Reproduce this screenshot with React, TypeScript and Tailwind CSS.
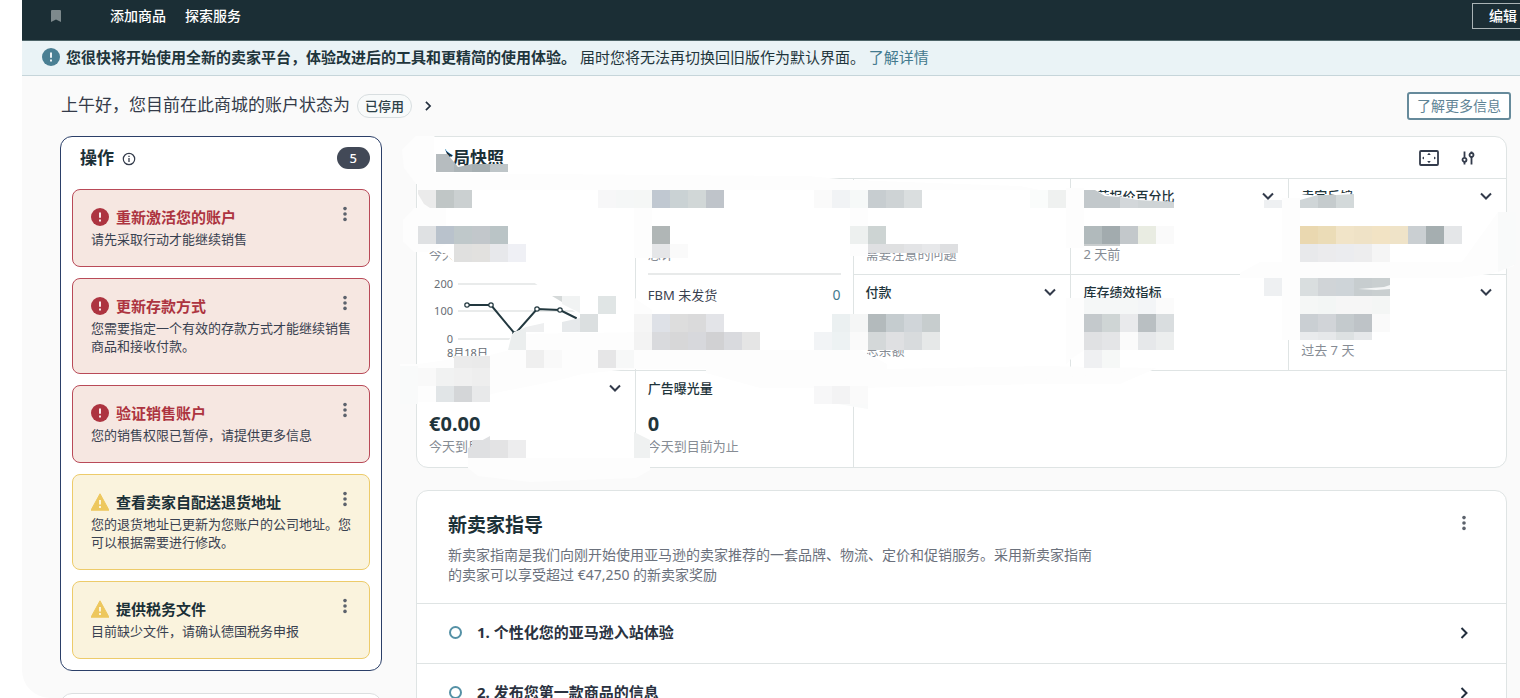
import type { ReactNode } from "react";
import { clsx } from "clsx";

interface Task {
  level: "error" | "warning";
  title: string;
  text: string;
}

const TASKS: Task[] = [
  { level: "error", title: "重新激活您的账户", text: "请先采取行动才能继续销售" },
  {
    level: "error",
    title: "更新存款方式",
    text: "您需要指定一个有效的存款方式才能继续销售商品和接收付款。",
  },
  { level: "error", title: "验证销售账户", text: "您的销售权限已暂停，请提供更多信息" },
  {
    level: "warning",
    title: "查看卖家自配送退货地址",
    text: "您的退货地址已更新为您账户的公司地址。您可以根据需要进行修改。",
  },
  { level: "warning", title: "提供税务文件", text: "目前缺少文件，请确认德国税务申报" },
];

const STEPS = ["1. 个性化您的亚马逊入站体验", "2. 发布您第一款商品的信息"];

const TILE = 18;

// Mosaic rows: top edge, height, first column, colours from left to right
const MOSAIC: [number, number, number, string[]][] = [
  [54, 18, 1, ["#ebebeb", "#c0c6c6", "#cbd0d1"]],
  [54, 18, 11, ["#f7f7f8", "#f5f7f7", "#f5f7f6", "#c0c8d1", "#cad2d4", "#d1d7d7", "#bfc4ca"]],
  [54, 18, 23, ["#fafafa", "#f1f3f5", "#f6f9f8", "#c7cdd0", "#ced3d5", "#dadedf"]],
  [54, 18, 35, ["#fafcfb", "#eff1f0"]],
  [64, 8, 48, ["#eef0f2"]],
  [90, 18, 1, ["#dfe1e3", "#b9c2cc", "#bfc8ca", "#c2c7cb", "#bac4c6"]],
  [90, 18, 14, ["#b0b6b6"]],
  [90, 18, 25, ["#edf0ef", "#cdd4d3"]],
  [90, 18, 38, ["#b1babc", "#a2abae", "#c3c8cb", "#e9ece2", "#fafafa"]],
  [90, 18, 50, ["#ead8b0", "#ebdcb7", "#f1e4c8", "#efe2c6", "#f2e3c4", "#efe3c8", "#cacfd2", "#a5aeb0", "#e4e6e8"]],
  [108, 18, 3, ["#e0e0df", "#e2e1df", "#e7e8eb", "#eff0f5"]],
  [108, 14, 14, ["#e5e6e8", "#fafafa"]],
  [108, 9, 26, ["#dfe0e2", "#dfe0e1", "#e3e4e6", "#e7e8ea", "#dedfe1"]],
  [108, 2, 38, ["#c9cdce", "#c9cdce"]],
  [108, 18, 50, ["#e8e9eb", "#ebebed", "#ebecef", "#ededee", "#f5f5f5"]],
  [142, 18, 48, ["#eef0f2"]],
  [142, 18, 50, ["#d9dedf", "#d0d4d7", "#ced4d8", "#c7cdcf", "#c9cfd0"]],
  [160, 18, 11, ["#e0e5e5"]],
  [162, 16, 38, ["#f5f7f7", "#f5f7f7", "#f5f7f7", "#f3f5f7", "#fbfbfb"]],
  [160, 18, 50, ["#f5f7f6", "#f3f6f5", "#f6f6f6", "#f6f6f6", "#f4f6f5"]],
  [178, 18, 10, ["#dbdfe0"]],
  [178, 18, 13, ["#f5f5f5", "#dee1e7", "#dddddd", "#dadadb", "#e3e4e8"]],
  [178, 18, 24, ["#ebf0f1", "#f5f6f6", "#b3babc", "#c5cccf", "#d0d5d9", "#c7cdce"]],
  [178, 18, 38, ["#c4c9cc", "#cfd5d5", "#e9eaec", "#b9bfc2", "#d9dddf"]],
  [178, 18, 50, ["#cacfd3", "#d1d4d8", "#c4cacd", "#bec3c7", "#fafafa"]],
  [196, 18, 13, ["#f3f3f3", "#d9dadd", "#d7d7d8", "#d7d8dc", "#d1d1d3", "#d9dade", "#e5e5e5"]],
  [196, 18, 23, ["#f2f4f6", "#edf2f3", "#fafafa", "#d4d8d9", "#dfe0e2", "#d8dbdd", "#e6e8e8"]],
  [196, 18, 38, ["#e0e1e3", "#e4e5e7", "#fbfbfb", "#e6e8ea", "#eceeee"]],
  [196, 8, 50, ["#e9ebed", "#e6e8ea", "#dde1e2", "#e6e8ea"]],
  [214, 18, 7, ["#efefef", "#f9f9f9"]],
  [214, 18, 11, ["#e6e6e7", "#f7f8f8"]],
  [214, 18, 38, ["#eff0f2", "#f6f8f7"]],
  [220, 12, 3, ["#ebebeb", "#eaeaea"]],
  [232, 18, 1, ["#f9f9f9", "#f1f2f2", "#f0f0f0", "#eeeeee"]],
  [250, 16, 2, ["#e1e5e7", "#d4d6d8", "#e8e9ea"]],
  [250, 18, 23, ["#f7f7f8", "#f3f3f4", "#fafafa"]],
  [304, 18, 4, ["#dfe0e2", "#e3e3e4", "#ededee"]],
];

function ErrorIcon({ color }: { color: string }) {
  return (
    <svg viewBox="0 0 18 18" className="h-[18px] w-[18px] shrink-0" aria-hidden="true">
      <circle cx="9" cy="9" r="9" fill={color} />
      <path d="M9 4.6v5.2" stroke="#fff" strokeWidth="1.8" />
      <path d="M9 11.6v1.9" stroke="#fff" strokeWidth="1.8" />
    </svg>
  );
}

function WarningIcon() {
  return (
    <svg viewBox="0 0 18 18" className="h-[18px] w-[18px] shrink-0" aria-hidden="true">
      <path d="M9 .8 18 17.2H0z" fill="#edc75d" stroke="#edc75d" strokeLinejoin="round" />
      <path d="M9 7v4.4M9 13v2" stroke="#fdf8e6" strokeWidth="1.8" />
    </svg>
  );
}

function MoreButton({ label }: { label: string }) {
  return (
    <button aria-label={label} className="flex h-4 w-4 shrink-0 items-center justify-center">
      <svg viewBox="0 0 4 16" className="h-4 w-1" fill="#5c626c">
        <circle cx="2" cy="2.6" r="1.8" />
        <circle cx="2" cy="8" r="1.8" />
        <circle cx="2" cy="13.4" r="1.8" />
      </svg>
    </button>
  );
}

function ChevronDown() {
  return (
    <svg viewBox="0 0 12 8" className="h-2 w-3" fill="none" stroke="#333b4b" strokeWidth="2">
      <path d="M1 1.5 6 6.5l5-5" />
    </svg>
  );
}

function ChevronRight({ className }: { className: string }) {
  return (
    <svg viewBox="0 0 8 12" className={className} fill="none" stroke="#232f3e" strokeWidth="2">
      <path d="M1.5 1 6.5 6l-5 5" />
    </svg>
  );
}

function TaskCard({ task }: { task: Task }) {
  const isError = task.level === "error";
  return (
    <li
      className={clsx(
        "rounded-lg border pt-4 pr-4 pb-[18px] pl-[18px]",
        isError ? "border-[#b94a58] bg-[#f6e7e1]" : "border-[#edcb6a] bg-[#faf3dd]",
      )}
    >
      <div className="flex h-[22px] items-center gap-[7px]">
        {isError ? <ErrorIcon color="#ad3440" /> : <WarningIcon />}
        <h3
          className={clsx(
            "flex-1 text-[15px] leading-[22px] font-bold",
            isError ? "text-[#ad3440]" : "text-[#1b3037]",
          )}
        >
          {task.title}
        </h3>
        <div className="-mt-1.5">
          <MoreButton label={task.title} />
        </div>
      </div>
      <p className="mt-0.5 text-[13px] leading-[18px] text-[#394150]">{task.text}</p>
    </li>
  );
}

interface CellProps {
  label?: string;
  value?: string;
  note?: string;
  expandable?: boolean;
  className?: string;
  children?: ReactNode;
}

function Cell({ label, value, note, expandable, className, children }: CellProps) {
  return (
    <div className={clsx("border-[#dfe4e4] pt-2 pr-3 pl-3", className)}>
      <div className="flex h-[18px] items-center justify-between">
        <h3 className="text-[13px] leading-[18px] font-medium text-[#1f353c]">{label}</h3>
        {expandable && (
          <button aria-label="展开" className="p-0.5">
            <ChevronDown />
          </button>
        )}
      </div>
      <p className="mt-[13px] h-[27px] text-xl leading-7 font-bold text-[#1f353c]">{value}</p>
      <p className="h-[18px] text-[13px] leading-[18px] text-[#868c94]">{note}</p>
      {children}
    </div>
  );
}

function SalesChart() {
  const points = [
    [38, 42],
    [62, 42],
    [86, 71],
    [108, 46],
    [131, 47],
    [155, 59],
  ];
  return (
    <svg width="190" height="100" viewBox="0 0 190 100" className="block">
      <g stroke="#e9ebeb" strokeWidth="2">
        <path d="M29 21H185M29 48H185M29 76H185" />
      </g>
      <g fill="#676d74" fontSize="11" textAnchor="end">
        <text x="24" y="25">200</text>
        <text x="24" y="52">100</text>
        <text x="24" y="80">0</text>
      </g>
      <text x="18" y="94" fontSize="11" fill="#676d74">
        8月18日
      </text>
      <polyline points={points.join(" ")} fill="none" stroke="#22383f" strokeWidth="2" />
      {points.map(([x, y]) => (
        <circle key={x} cx={x} cy={y} r="2.2" fill="#fff" stroke="#22383f" strokeWidth="1.2" />
      ))}
    </svg>
  );
}

// Blurred-out figures of the snapshot, drawn over the cells
function Mosaic() {
  return (
    <svg
      width="1120"
      height="352"
      viewBox="0 0 1120 352"
      className="pointer-events-none absolute -top-px -left-[17px]"
      aria-hidden="true"
    >
      {/* brush smears */}
      <g fill="#fff">
        <path d="M18 0H34L45 13 47 18 58 31 58 37H18z" />
        <path d="M19 54H640V108H19z" />
        <path d="M18 108H54V126L46 118 40 115H18z" />
        <path d="M54 108H250V122H54z" />
        <path d="M232 108H276V120H232z" />
        <path d="M132 145 150 158 178 178 176 185 143 187 128 191 114 196 109 204 108 214 90 219 54 223 18 228V246H90V233H233L250 232V178L234 162V145z" />
        <path d="M232 162 240 163 262 178H456V214H232z" />
        <path d="M450 52H640V117H450z" />
        <path d="M684 54 695 54 705 58 745 64 774 66V90H684z" />
        <path d="M900 58 920 60 950 56 954 72H900z" />
      </g>
      <g fill="#fdfdfd">
        <path d="M18 37 408 40 450 44 620 50 640 54H18z" />
        <path d="M16 0H34V48H16L4 32 2 14z" />
        <path d="M18 72H14L3 84V106L14 116H30L46 108V72z" />
        <path d="M0 228H18L54 223 90 219 110 214 112 198 250 196V214H306V233H231L182 238 160 244 100 256 60 266H0z" />
        <path d="M306 214 460 214 487 228V240H640L757 232 720 248H640L460 252H360L306 237z" />
        <path d="M487 233 640 230 757 232 640 244H487z" />
        <path d="M234 42H252V122H234zM234 162 252 174V232H234z" />
        <path d="M450 44H468V120H450zM450 178H468V214H450zM450 230H468V273L450 270z" />
        <path d="M666 52H684V112H666zM666 162H684V214L672 222 666 228z" />
        <path d="M882 62H900V204H882z" />
        <path d="M840 137 860 126H1062L1098 76H1114V130L1090 138 1060 142H840z" />
        <path d="M68 322H250V334L236 342 130 346 78 340 68 332z" />
      </g>
      <g fill="#f9fafa">
        <path d="M1098 76H1116V128L1098 136z" />
        <path d="M0 230H18V268H0z" />
        <path d="M414 250H468V273L414 264z" />
      </g>

      {MOSAIC.map(([y, height, column, colors]) =>
        colors.map((color, i) => (
          <rect
            key={`${column + i}-${y}`}
            x={(column + i) * TILE}
            y={y}
            width={TILE}
            height={height}
            fill={color}
          />
        )),
      )}

      {/* tiles cut by the edge of the brush */}
      <path d="M36 18H47L54 26V36H36z" fill="#b6bcbf" />
      <path d="M54 26 58 31 72 28V36H54z" fill="#acb4b7" />
      <path d="M72 28H90V36H72z" fill="#a6afb2" />
      <path d="M90 28H108V36H90z" fill="#bec5c8" />
      <path d="M684 54H695L705 60 720 61V72H684z" fill="#c2c8cb" />
      <path d="M720 61 738 64V72H720z" fill="#d3d7da" />
      <path d="M738 64 774 66V72H738z" fill="#cfd4d6" />
      <path d="M900 64 918 59V72H900z" fill="#cfd5d7" />
      <path d="M918 59H936V72H918z" fill="#c5cbcd" />
      <path d="M936 59 954 58V72H936z" fill="#d3d9da" />
      <path d="M152 160H162V166z" fill="#d5d9d9" />
      <path d="M162 160H180V177L162 168z" fill="#f1f3f3" />
      <path d="M162 186 180 182V196H162z" fill="#e6e9eb" />
      <path d="M112 198 126 191V214H108z" fill="#ebeeee" />
      <path d="M126 191 144 187V196H126z" fill="#eeeff0" />
      <path d="M68 322V312L90 300V322z" fill="#dfe0e2" />
      <path d="M234 296 250 304V322H234z" fill="#eff1f1" />
      <path d="M958 153 984 151 990 149V153L976 154z" fill="#f4f6f6" />
      <path d="M18 54V58L24 68 30 72H18z" fill="#fdfdfd" />
    </svg>
  );
}

export default function App() {
  return (
    <div className="h-screen overflow-hidden bg-white pl-[22px] font-['Noto_Sans','Noto_Sans_CJK_SC',sans-serif]">
      <div className="h-screen overflow-hidden rounded-bl-[28px] bg-[#fafafa]">
        {/* Top bar */}
        <nav className="flex h-[41px] items-center border-b border-[#4d6468] bg-[#1b2e35] pb-2 pl-[29px] text-sm text-white">
          <svg viewBox="0 0 10 12" className="h-3 w-2.5" fill="#7d898c" aria-hidden="true">
            <path d="M1 0h8a1 1 0 0 1 1 1v11L5 9.500 0 12V1a1 1 0 0 1 1-1z" />
          </svg>
          <a href="#add" className="ml-[49px] font-medium">
            添加商品
          </a>
          <a href="#services" className="ml-[19px] font-medium">
            探索服务
          </a>
          <button className="ml-auto h-[26px] border border-r-0 border-[#aab4b6] pr-[3px] pl-4 font-medium">
            编辑
          </button>
        </nav>

        {/* Notice */}
        <div className="flex h-[35px] items-center gap-1.5 border-b border-[#c6d5da] bg-[#eaf3f6] pb-0.5 pl-5 text-[15px] whitespace-nowrap text-[#1f353c]">
          <ErrorIcon color="#4a7f93" />
          <p>
            <strong className="font-bold">
              您很快将开始使用全新的卖家平台，体验改进后的工具和更精简的使用体验。
            </strong>{" "}
            届时您将无法再切换回旧版作为默认界面。{" "}
            <a href="#details" className="text-[#437a8e]">
              了解详情
            </a>
          </p>
        </div>

        {/* Greeting */}
        <header className="flex h-[60px] items-center pr-[9px] pl-[39px]">
          <h1 className="pb-0.5 text-[17px] leading-6 text-[#343b49]">
            上午好，您目前在此商城的账户状态为
          </h1>
          <span className="ml-[7px] rounded-full border border-[#d8dee0] bg-[#f8fafa] px-[7px] text-[13px] leading-[22px] font-medium text-[#2c4047]">
            已停用
          </span>
          <ChevronRight className="ml-3 h-2.5 w-2" />
          <button className="ml-auto h-7 rounded-[3px] border-2 border-[#668a9b] bg-white px-2 text-sm leading-5 text-[#5f8496]">
            了解更多信息
          </button>
        </header>

        <main className="flex items-start gap-[34px] pr-[13px] pl-[38px]">
          <aside className="flex w-[322px] shrink-0 flex-col gap-[22px]">
            <section className="rounded-xl border border-[#2b3f68] bg-white px-[11px] pb-[11px]">
              <div className="flex h-[52px] items-center pb-2.5 pl-2">
                <h2 className="text-[17px] leading-6 font-bold text-[#1b3037]">操作</h2>
                <svg
                  viewBox="0 0 14 14"
                  className="mt-0.5 ml-2 h-3.5 w-3.5"
                  fill="none"
                  stroke="#333b4b"
                  aria-hidden="true"
                >
                  <circle cx="7" cy="7" r="5.700" strokeWidth="1.200" />
                  <path d="M7 6v4M7 3.800v1.300" strokeWidth="1.300" />
                </svg>
                <span className="ml-auto rounded-full bg-[#424957] px-[13px] text-[13px] leading-[22px] font-medium text-white">
                  5
                </span>
              </div>
              <ul className="flex flex-col gap-[11px]">
                {TASKS.map((task) => (
                  <TaskCard key={task.title} task={task} />
                ))}
              </ul>
            </section>
            <section className="h-20 rounded-xl border border-[#dcdfe0] bg-white" />
          </aside>

          <div className="flex min-w-0 flex-1 flex-col gap-[22px]">
            {/* Snapshot */}
            <section className="relative rounded-xl border border-[#dfe4e4] bg-white">
              <div className="flex h-[42px] items-center border-b border-[#dfe4e4] pr-[31px] pl-[19px]">
                <h2 className="text-[17px] leading-6 font-bold text-[#1b3037]">全局快照</h2>
                <button aria-label="全屏" className="ml-auto">
                  <svg viewBox="0 0 20 16" className="h-4 w-5" fill="none" stroke="#333b4b">
                    <rect x="1" y="1" width="18" height="14" rx="1" strokeWidth="1.800" />
                    <path
                      d="M10 2.800 11.800 5H8.200zM10 13.200 8.200 11h3.600zM3 8l2-1.600v3.200zM17 8l-2-1.600v3.200z"
                      fill="#333b4b"
                      stroke="none"
                    />
                  </svg>
                </button>
                <button aria-label="自定义" className="ml-[22px]">
                  <svg viewBox="0 0 14 14" className="h-3.5 w-3.5" fill="none" stroke="#333b4b" strokeWidth="1.800">
                    <path d="M3.500.500v6M3.500 11v2.500M10.500 6v7.500M10.500.500v1.500" />
                    <circle cx="3.500" cy="8.800" r="2" />
                    <circle cx="10.500" cy="4" r="2" />
                  </svg>
                </button>
              </div>

              <div className="grid auto-rows-[96px] grid-cols-5">
                <Cell note="今天到目前" className="row-span-2 border-b">
                  <SalesChart />
                </Cell>
                <Cell note="总计" className="row-span-2 border-b border-l">
                  <div className="mt-2.5 flex items-center justify-between border-t-2 border-[#e8eaea] pt-2.5 text-[13px] leading-5 text-[#394150]">
                    <span>FBM 未发货</span>
                    <a href="#fbm" className="text-sm text-[#437a8e]">
                      0
                    </a>
                  </div>
                </Cell>
                <Cell note="需要注意的问题" className="border-b border-l" />
                <Cell label="推荐报价百分比" note="2 天前" expandable className="border-b border-l" />
                <Cell label="卖家反馈" expandable className="border-b border-l" />
                <Cell label="付款" note="总余额" expandable className="border-b border-l" />
                <Cell label="库存绩效指标" className="border-b border-l" />
                <Cell note="过去 7 天" expandable className="border-b border-l" />
                <Cell value="€0.00" note="今天到目前" expandable />
                <Cell label="广告曝光量" value="0" note="今天到目前为止" className="border-l" />
                <div className="col-span-3 border-l border-[#dfe4e4]" />
              </div>
              <Mosaic />
            </section>

            {/* New seller guide */}
            <section className="rounded-xl border border-[#dfe4e4] bg-white">
              <div className="flex items-start justify-between pt-5 pr-[34px] pb-[18px] pl-[31px]">
                <div>
                  <h2 className="text-[19px] leading-7 font-bold text-[#1b3037]">新卖家指导</h2>
                  <p className="mt-1.5 max-w-[650px] text-sm leading-5 text-[#6b717c]">
                    新卖家指南是我们向刚开始使用亚马逊的卖家推荐的一套品牌、物流、定价和促销服务。采用新卖家指南的卖家可以享受超过
                    €47,250 的新卖家奖励
                  </p>
                </div>
                <div className="pt-1">
                  <MoreButton label="新卖家指导" />
                </div>
              </div>
              {STEPS.map((step) => (
                <a
                  key={step}
                  href="#step"
                  className="flex h-[60px] items-center border-t border-[#dfe4e4] pr-[38px] pb-0.5 pl-8"
                >
                  <span className="h-[13px] w-[13px] rounded-full border-2 border-[#5591a6]" />
                  <span className="ml-[15px] text-[15px] font-bold text-[#2a3240]">{step}</span>
                  <ChevronRight className="ml-auto h-3 w-2" />
                </a>
              ))}
            </section>
          </div>
        </main>
      </div>
    </div>
  );
}
